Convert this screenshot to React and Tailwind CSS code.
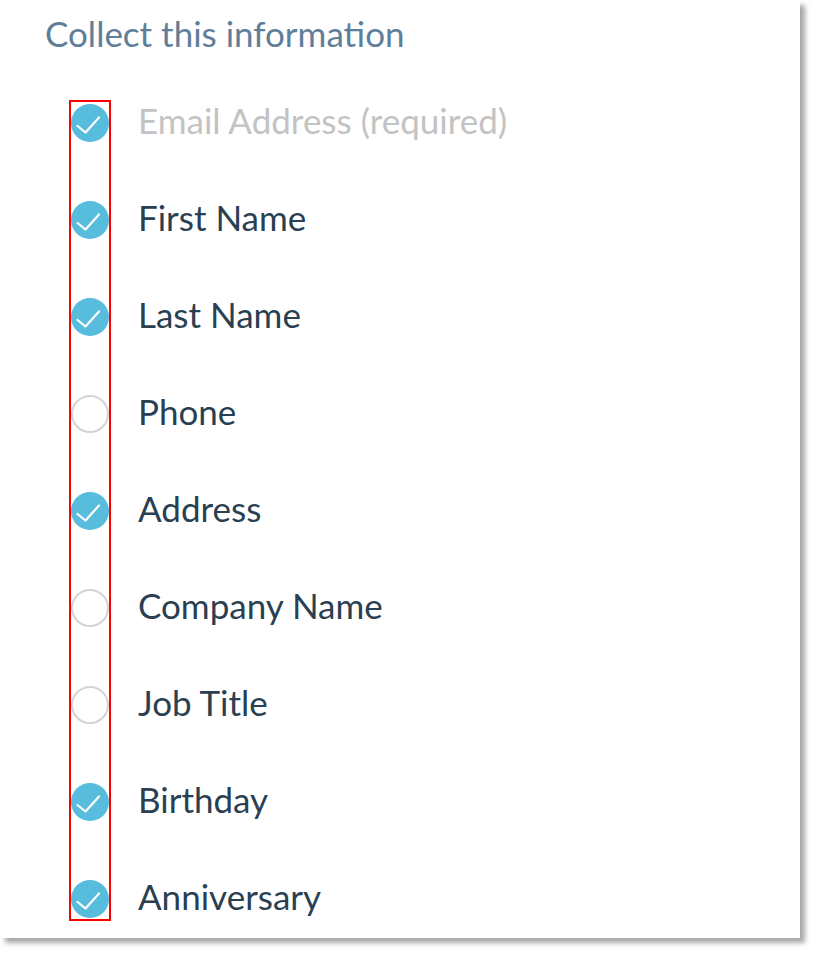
import React from 'react';

const fields = [
  { label: 'Email Address (required)', checked: true, locked: true },
  { label: 'First Name', checked: true },
  { label: 'Last Name', checked: true },
  { label: 'Phone', checked: false },
  { label: 'Address', checked: true },
  { label: 'Company Name', checked: false },
  { label: 'Job Title', checked: false },
  { label: 'Birthday', checked: true },
  { label: 'Anniversary', checked: true },
];

function CheckCircle({ checked }) {
  if (!checked) {
    return <div className="w-[38px] h-[38px] shrink-0 rounded-full border-2 border-[#d3d3d7] bg-white" />;
  }
  return (
    <div className="w-[38px] h-[38px] shrink-0 rounded-full bg-[#58bcdc] flex items-center justify-center">
      <svg width="38" height="38" viewBox="0 0 38 38" fill="none">
        <path d="M6.5 22 L14.5 28.5 L28 13.5" stroke="white" strokeWidth="2.2" strokeLinecap="round" strokeLinejoin="round" />
      </svg>
    </div>
  );
}

export default function App() {
  return (
    <div className="w-[815px] h-[954px] bg-white" style={{ fontFamily: 'Lato, "Open Sans", sans-serif' }}>
      <div className="relative w-[800px] h-[938px] bg-white shadow-[5px_5px_5px_rgba(0,0,0,0.35)]">
        {/* Heading */}
        <div className="pl-[45px] pt-[13px] pb-[1px] text-[35px] leading-[40px] text-[#5e7e9a]">
          Collect this information
        </div>

        {/* Field list */}
        <div className="flex flex-col pt-[20px]">
          {fields.map((f) => (
            <div key={f.label} className="flex items-center h-[97px] pl-[71px]">
              <CheckCircle checked={f.checked} />
              <span className={`ml-[29px] pb-[5px] text-[35px] leading-[40px] ${f.locked ? 'text-[#c3c3c3]' : 'text-[#2a3f52]'}`}>
                {f.label}
              </span>
            </div>
          ))}
        </div>

        {/* annotation box round the checkbox column */}
        <div className="absolute left-[69px] top-[100px] w-[42px] h-[821px] border-2 border-[#ff0000]" />
      </div>
    </div>
  );
}
